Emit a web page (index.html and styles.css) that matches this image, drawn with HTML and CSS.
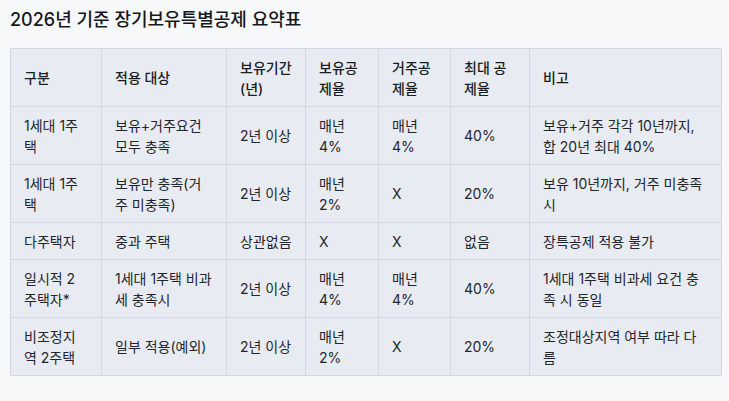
FILE: index.html
```html
<!DOCTYPE html>
<html lang="ko">
<head>
<meta charset="utf-8">
<link rel="stylesheet" href="styles.css">
</head>
<body>
<div class="page">
  <h2 class="title">2026년 기준 장기보유특별공제 요약표</h2>
  <table class="summary">
    <colgroup>
      <col class="c1"><col class="c2"><col class="c3"><col class="c4"><col class="c5"><col class="c6"><col class="c7">
    </colgroup>
    <thead>
      <tr>
        <th>구분</th>
        <th>적용 대상</th>
        <th>보유기간<br>(년)</th>
        <th>보유공<br>제율</th>
        <th>거주공<br>제율</th>
        <th>최대 공<br>제율</th>
        <th>비고</th>
      </tr>
    </thead>
    <tbody>
      <tr>
        <td>1세대 1주택</td>
        <td>보유+거주요건 모두 충족</td>
        <td>2년 이상</td>
        <td>매년<br>4%</td>
        <td>매년<br>4%</td>
        <td>40%</td>
        <td>보유+거주 각각 10년까지,<br>합 20년 최대 40%</td>
      </tr>
      <tr>
        <td>1세대 1주택</td>
        <td>보유만 충족(거주 미충족)</td>
        <td>2년 이상</td>
        <td>매년<br>2%</td>
        <td>X</td>
        <td>20%</td>
        <td>보유 10년까지, 거주 미충족시</td>
      </tr>
      <tr>
        <td>다주택자</td>
        <td>중과 주택</td>
        <td>상관없음</td>
        <td>X</td>
        <td>X</td>
        <td>없음</td>
        <td>장특공제 적용 불가</td>
      </tr>
      <tr>
        <td>일시적 2<br>주택자*</td>
        <td>1세대 1주택 비과세 충족시</td>
        <td>2년 이상</td>
        <td>매년<br>4%</td>
        <td>매년<br>4%</td>
        <td>40%</td>
        <td>1세대 1주택 비과세 요건 충족 시 동일</td>
      </tr>
      <tr>
        <td>비조정지<br>역 2주택</td>
        <td>일부 적용(예외)</td>
        <td>2년 이상</td>
        <td>매년<br>2%</td>
        <td>X</td>
        <td>20%</td>
        <td>조정대상지역 여부 따라 다름</td>
      </tr>
    </tbody>
  </table>
</div>
</body>
</html>
```

FILE: styles.css
```css
html, body {
  margin: 0;
  padding: 0;
  background: #f7f8fa;
}
body {
  font-family: "Inter", "Noto Sans CJK KR", sans-serif;
  color: #1f2329;
}
.page {
  padding: 9px 9px 0 10px;
}
.title {
  margin: 0 0 18px 0;
  font-size: 18px;
  line-height: 21px;
  font-weight: 500;
  color: #16181c;
}
.summary {
  width: 711px;
  border-collapse: collapse;
  table-layout: fixed;
  background: #e8ecf2;
  font-size: 14px;
  line-height: 21px;
}
.c1 { width: 91px; }
.c2 { width: 125px; }
.c3 { width: 79px; }
.c4 { width: 73px; }
.c5 { width: 72px; }
.c6 { width: 79px; }
.c7 { width: 192px; }
.summary th,
.summary td {
  border: 1px solid #d2d8e2;
  padding: 7.5px 13px;
  text-align: left;
  vertical-align: middle;
}
.summary th {
  font-weight: 500;
  color: #1a1d22;
}
.summary td {
  font-weight: 400;
  color: #22262c;
}
```
